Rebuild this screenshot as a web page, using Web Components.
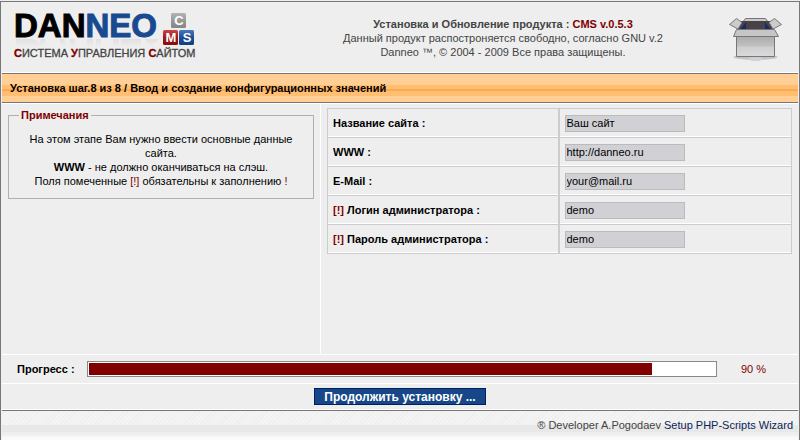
<!DOCTYPE html>
<html lang="ru">
<head>
<meta charset="utf-8">
<title>Danneo CMS</title>
<style>
html, body { height: 100%; }
body { margin: 0; background: #eee; font: 11px/14px "Liberation Sans", Arial, sans-serif; color: #000; }
</style>
</head>
<body>
<setup-page></setup-page>
<script>
const define = (name, html, init) => customElements.define(name, class extends HTMLElement {
  constructor() {
    super();
    this.attachShadow({ mode: "open" }).innerHTML = html;
  }
  connectedCallback() { if (init) init(this, this.shadowRoot); }
});

define("danneo-logo", `
<style>
:host { display: block; }
svg { display: block; }
.name { font: bold 33px "Liberation Sans", Arial, sans-serif; stroke: #000; stroke-width: 1px; }
.neo { fill: #174a90; stroke: #174a90; }
.sub { font: 11px "Liberation Sans", Arial, sans-serif; fill: #444; stroke: #444; stroke-width: .3px; }
.cap { font-weight: bold; fill: #800000; stroke: #800000; }
.cube { font: bold 13px "Liberation Sans", Arial, sans-serif; fill: #fff; text-anchor: middle; }
</style>
<svg width="190" height="60" viewBox="0 0 190 60" role="img" aria-label="Danneo CMS">
  <defs>
    <linearGradient id="g" x2="0" y2="1"><stop stop-color="#b4b4b4"/><stop offset=".5" stop-color="#999"/><stop offset="1" stop-color="#858585"/></linearGradient>
    <linearGradient id="r" x2="0" y2="1"><stop stop-color="#c44"/><stop offset=".5" stop-color="#a01818"/><stop offset="1" stop-color="#8c0c0c"/></linearGradient>
    <linearGradient id="b" x2="0" y2="1"><stop stop-color="#4a78b8"/><stop offset=".5" stop-color="#1d4f97"/><stop offset="1" stop-color="#123f80"/></linearGradient>
    <linearGradient id="s" x2="0" y2="1"><stop stop-color="#e0e0e0"/><stop offset="1" stop-color="#eee"/></linearGradient>
  </defs>
  <path d="M4 37h14q8 0 10 8H4zM29 37h5l-3 8h-5zM47 37h5l3 8h-5zM58 37h5v8h-5zM75 37h6v8h-6zM84 37h5v8h-5zM101 37h6v8h-6zM109 37h20v8h-20zM133 37h14l-5 5h-6z" fill="url(#s)"/>
  <text class="name" x="2" y="35">DAN<tspan class="neo">NEO</tspan></text>
  <rect x="159" y="11" width="15" height="15" rx="1.5" fill="url(#g)"/>
  <rect x="151" y="28" width="15" height="15" rx="1.5" fill="url(#r)"/>
  <rect x="167" y="28" width="15" height="15" rx="1.5" fill="url(#b)"/>
  <text class="cube" x="167" y="23">C</text>
  <text class="cube" x="159" y="40">M</text>
  <text class="cube" x="175" y="40">S</text>
  <text class="sub" x="2" y="55"><tspan class="cap">С</tspan>ИСТЕМА <tspan class="cap">У</tspan>ПРАВЛЕНИЯ <tspan class="cap">С</tspan>АЙТОМ</text>
</svg>`);

define("box-icon", `
<style>:host { display: block; } svg { display: block; }</style>
<svg width="56" height="48" viewBox="0 0 56 48" aria-hidden="true">
  <defs><linearGradient id="f" x2="0" y2="1"><stop stop-color="#aaa"/><stop offset=".5" stop-color="#c0c0c0"/><stop offset=".55" stop-color="#cfcfd2"/><stop offset="1" stop-color="#dadadc"/></linearGradient></defs>
  <ellipse cx="27.5" cy="41" rx="22" ry="3" fill="#c4c4c4"/><ellipse cx="27.5" cy="43" rx="7" ry="2" fill="#d2d2d2"/>
  <path d="M17.5 2.5h20l3 4h-26z" fill="#c8c8c8" stroke="#777"/>
  <path d="M13 5h29l4 9H9z" fill="#484248"/>
  <path d="M18 6v8h-6zM37 6v8h6z" fill="#152c68"/>
  <path d="M8.5 19.5h38v21h-38z" fill="url(#f)" stroke="#777"/>
  <path d="M8.5 13.5h38l4 7h-45z" fill="#c6c6c6" stroke="#777"/>
  <path d="M1.5 8.5l7-6 5.5 4-4 6.5z" fill="#ccc" stroke="#777"/>
  <path d="M53.5 8.5l-7-6-5.5 4 4 6.5z" fill="#ccc" stroke="#777"/>
</svg>`);

define("setup-header", `
<style>
:host { display: grid; grid-template-columns: 304px 1fr 98px; height: 71px; box-sizing: border-box; border-bottom: 1px solid #fff; color: #444; }
danneo-logo { margin-left: 10px; }
p { margin: 15px 0 0; text-align: center; }
box-icon { margin: 14px 0 0 28px; }
em { font-style: normal; color: #800000; }
</style>
<danneo-logo></danneo-logo>
<p><b>Установка и Обновление продукта : <em>CMS v.0.5.3</em></b><br>Данный продукт распостроняется свободно, согласно GNU v.2<br>Danneo ™, © 2004 - 2009 Все права защищены.</p>
<box-icon></box-icon>`);

define("step-title", `
<style>
:host { display: block; border: solid #777; border-width: 1px 0; box-shadow: 0 1px #fff; background: linear-gradient(#ffcf95 11px, #ffbe72 11px 15px, #ffa94f 15px 17px, #ffbe72 17px 22px, #ffcf95 22px); }
h1 { margin: 0; font-size: 11px; line-height: 28px; padding-left: 8px; }
</style><h1><slot></slot></h1>`);

define("note-box", `
<style>
:host { display: block; }
fieldset { margin: 0; padding: 10px 16px; border: 1px solid #b0b0b0; }
legend { margin-left: -6px; padding: 0 2px; font-weight: bold; color: #800000; }
div { text-align: center; }
</style><fieldset><legend><slot name="title"></slot></legend><div><slot></slot></div></fieldset>`);

define("settings-form", `
<style>
:host { display: block; }
table { width: 100%; border-collapse: separate; border-spacing: 0; border: 1px solid #ccccd0; border-bottom: 0; }
th, td { height: 28px; padding: 0 5px; text-align: left; border-bottom: 1px solid #ccccd0; box-shadow: inset 0 -1px #fff; }
th { width: 50%; border-right: 2px solid #ccccd0; }
i { font-style: normal; color: #800000; }
input { display: block; box-sizing: border-box; width: 120px; height: 17px; margin: 0; padding: 0 1px; border: 1px solid #bbb; border-radius: 0; background: #d0d0d5; color: #000; font: inherit; }
</style><table></table>`, (host, root) => {
  const rows = [
    ["site", "Название сайта :", "Ваш сайт"],
    ["www", "WWW :", "http://danneo.ru"],
    ["mail", "E-Mail :", "your@mail.ru"],
    ["login", "Логин администратора :", "demo", 1],
    ["pass", "Пароль администратора :", "demo", 1]
  ];
  root.querySelector("table").innerHTML = rows.map(([id, label, value, must]) =>
    `<tr><th scope="row"><label for="${id}">${must ? "<i>[!]</i> " : ""}${label}</label></th><td><input id="${id}" type="text" value="${value}"></td></tr>`).join("");
});

define("setup-progress", `
<style>
:host { display: grid; grid-template-columns: 85px 1fr 81px; align-items: center; height: 28px; border: solid #fff; border-width: 1px 0; }
b { padding-left: 15px; }
.track { height: 12px; padding: 1px; border: 1px solid #888; background: #fff; }
.fill { width: 90%; height: 12px; background: #800000; }
span { color: #800000; text-align: center; padding-right: 8px; }
</style>
<b id="l">Прогресс :</b><div class="track" role="progressbar" aria-labelledby="l" aria-valuenow="90"><div class="fill"></div></div><span>90 %</span>`);

define("setup-footer", `
<style>
:host { display: block; height: 30px; box-sizing: border-box; border-top: 1px solid #777; text-align: right; padding: 7px 5px 0 0; color: #444;
  background: linear-gradient(transparent 14px, #e8e8e8 14px 21px, #eee 21px 24px, #f4f4f4 24px 26px, #fafafa 26px), repeating-linear-gradient(135deg, #f4f4f4 0 2px, #eee 2px 3px); }
a { color: #0a2458; text-decoration: none; }
</style>® Developer A.Pogodaev <a href="#">Setup PHP-Scripts Wizard</a>`);

define("setup-page", `
<style>
:host { display: flex; flex-direction: column; min-height: 100vh; box-sizing: border-box; padding-top: 1px; }
.frame { flex: 1; display: flex; flex-direction: column; border: 1px solid #777; border-bottom: 0; padding: 0 1px; }
main { flex: 1; display: grid; grid-template-columns: 319px 1fr; margin-top: 1px; }
aside { padding: 4px 6px; border-right: 1px solid #fff; }
section { padding: 4px 6px; }
i { font-style: normal; color: #800000; }
.action { text-align: center; padding: 4px 0; border-bottom: 1px solid #fff; }
button { height: 17px; padding: 0 9px; border: 1px solid #001f60; border-radius: 0; background: #174788; color: #fff; font: bold 12px/14px "Liberation Sans", Arial, sans-serif; display: block; margin: 0 auto; }
</style>
<div class="frame">
<setup-header></setup-header>
<step-title>Установка шаг.8 из 8 / Ввод и создание конфигурационных значений</step-title>
<main><aside><note-box><span slot="title">Примечания</span>На этом этапе Вам нужно ввести основные данные сайта.<br><b>WWW</b> - не должно оканчиваться на слэш.<br>Поля помеченные <i>[!]</i> обязательны к заполнению <i>!</i></note-box></aside>
<section><settings-form></settings-form></section></main>
<setup-progress></setup-progress>
<div class="action"><button type="button">Продолжить установку ...</button></div>
<setup-footer></setup-footer>
</div>`);
</script>
</body>
</html>
